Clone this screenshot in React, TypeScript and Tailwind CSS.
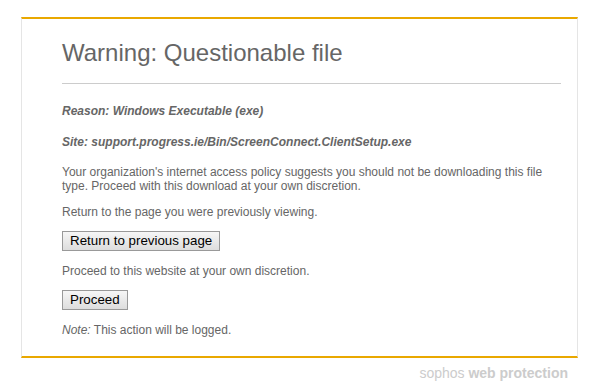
import React from 'react';

export default function App() {
  return (
    <div className="min-h-[387px] w-[592px] bg-white pt-[17px] font-['Liberation_Sans',Arial,sans-serif] text-[#666]">
      {/* Warning card */}
      <div className="ml-[21px] w-[557px] border-x border-y-2 border-x-[#e5e5e5] border-y-[#e9a800] pb-[19px] pl-[40px] pr-[16px] pt-[20px]">
        <h1 className="text-[24px] leading-[28px] text-[#666]">Warning: Questionable file</h1>
        <hr className="mt-[16px] border-t border-[#ccc]" />

        <p className="mt-[20px] text-[12px] font-bold italic leading-[14px]">Reason: Windows Executable (exe)</p>
        <p className="mt-[17px] text-[12px] font-bold italic leading-[14px]">
          Site: support.progress.ie/Bin/ScreenConnect.ClientSetup.exe
        </p>

        <p className="mt-[16px] text-[12px] leading-[14px]">
          Your organization's internet access policy suggests you should not be downloading this file type. Proceed with this download at your own discretion.
        </p>
        <p className="mt-[12px] text-[12px] leading-[14px]">Return to the page you were previously viewing.</p>
        <button className="mt-[12px] h-[20px] border border-[#999] bg-gradient-to-b from-[#f6f6f6] to-[#dddddd] px-[7px] text-[13.33px] leading-[16px] text-black">
          Return to previous page
        </button>

        <p className="mt-[12px] text-[12px] leading-[14px]">Proceed to this website at your own discretion.</p>
        <button className="mt-[12px] h-[20px] border border-[#999] bg-gradient-to-b from-[#f6f6f6] to-[#dddddd] px-[7px] text-[13.33px] leading-[16px] text-black">
          Proceed
        </button>

        <p className="mt-[12px] text-[12px] leading-[14px]">
          <em>Note:</em> This action will be logged.
        </p>
      </div>

      <div className="mt-[6px] w-[568px] text-right text-[14px] leading-[18px] text-[#ccc]">
        sophos <b>web protection</b>
      </div>
    </div>
  );
}
